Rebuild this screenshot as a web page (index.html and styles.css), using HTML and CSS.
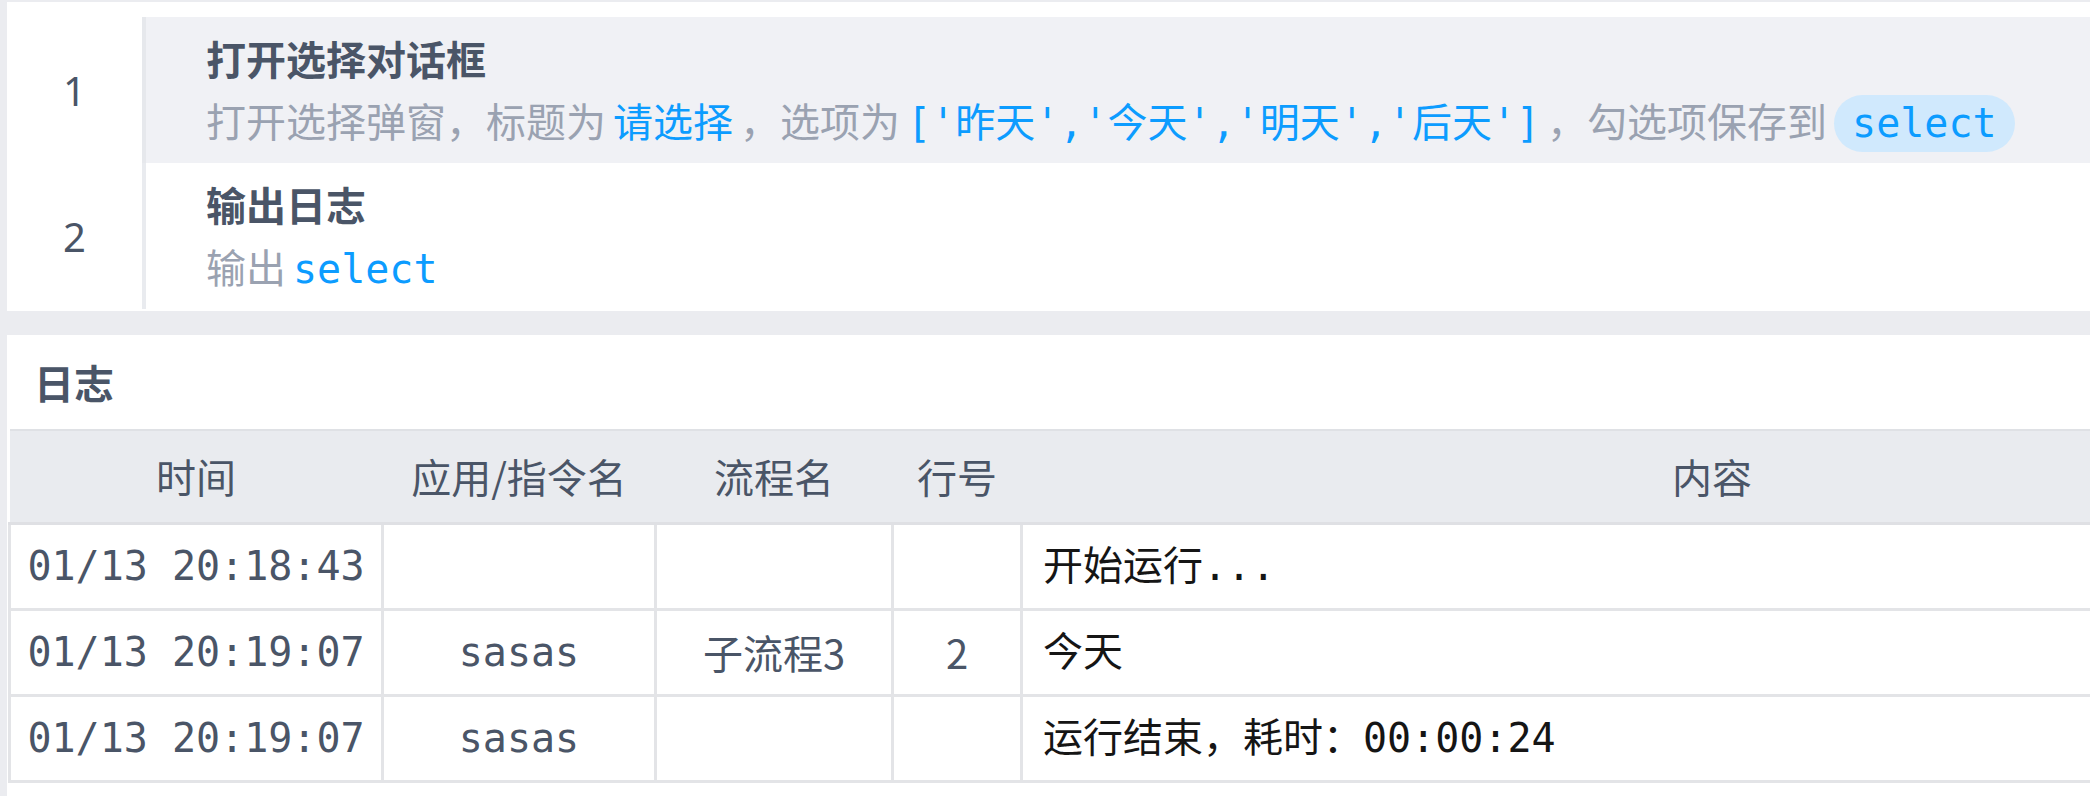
FILE: index.html
```html
<!DOCTYPE html>
<html lang="zh-CN">
<head>
<meta charset="utf-8">
<title>流程日志</title>
<link rel="stylesheet" href="styles.css">
</head>
<body>
<div class="page">
  <section class="flow">
    <div class="step active">
      <div class="step-no">1</div>
      <div class="step-body">
        <div class="step-title">打开选择对话框</div>
        <div class="step-desc">打开选择弹窗，标题为<span class="val">请选择</span>，选项为<span class="val code">['昨天','今天','明天','后天']</span>，勾选项保存到<span class="var">select</span></div>
      </div>
    </div>
    <div class="step">
      <div class="step-no">2</div>
      <div class="step-body">
        <div class="step-title">输出日志</div>
        <div class="step-desc">输出<span class="val code">select</span></div>
      </div>
    </div>
  </section>

  <section class="log">
    <h2 class="log-title">日志</h2>
    <table class="log-table">
      <colgroup>
        <col class="c-time">
        <col class="c-app">
        <col class="c-flow">
        <col class="c-line">
        <col class="c-msg">
      </colgroup>
      <thead>
        <tr><th>时间</th><th>应用/指令名</th><th>流程名</th><th>行号</th><th>内容</th></tr>
      </thead>
      <tbody>
        <tr>
          <td class="mono">01/13 20:18:43</td>
          <td class="mono"></td>
          <td></td>
          <td></td>
          <td class="msg">开始运行...</td>
        </tr>
        <tr>
          <td class="mono">01/13 20:19:07</td>
          <td class="mono">sasas</td>
          <td>子流程3</td>
          <td>2</td>
          <td class="msg">今天</td>
        </tr>
        <tr>
          <td class="mono">01/13 20:19:07</td>
          <td class="mono">sasas</td>
          <td></td>
          <td></td>
          <td class="msg">运行结束，耗时：00:00:24</td>
        </tr>
      </tbody>
    </table>
  </section>
</div>
</body>
</html>
```

FILE: styles.css
```css
html, body {
  margin: 0;
  padding: 0;
}

body {
  background: #ebecf0;
  overflow: hidden;
  font-family: "Noto Sans CJK SC", "Noto Sans", sans-serif;
  color: #4a5567;
}

.page {
  width: 2500px;
  padding: 2px 0 0 7px;
  display: flex;
  flex-direction: column;
  gap: 24px;
}

/* ---------- flow steps ---------- */
.flow {
  background: #ffffff;
  padding: 15px 0 2px 0;
}

.step {
  display: flex;
}

.step-no {
  width: 135px;
  flex: none;
  display: flex;
  align-items: center;
  justify-content: center;
  font-family: "Noto Sans", sans-serif;
  font-size: 40px;
  color: #4a5567;
}

.step-body {
  flex: 1;
  border-left: 4px solid #e9ebef;
  padding: 10px 0 12px 60px;
}

.step.active .step-body {
  background: #f0f1f5;
  border-left-color: #e6e8ec;
}

.step-title {
  height: 62px;
  font-size: 40px;
  line-height: 62px;
  font-weight: 700;
  color: #4a5567;
}

.step-desc {
  height: 62px;
  font-size: 40px;
  line-height: 62px;
  color: #9aa2b1;
  white-space: nowrap;
}

.val {
  color: #0c9cff;
  margin: 0 7px;
}

.code {
  font-family: "DejaVu Sans Mono", "Noto Sans CJK SC", monospace;
  line-height: 1;
}

.var {
  display: inline-block;
  vertical-align: middle;
  margin-left: 7px;
  padding: 0 18px;
  height: 57px;
  line-height: 57px;
  border-radius: 29px;
  background: #d0e9fd;
  color: #0c9cff;
  font-family: "DejaVu Sans Mono", monospace;
  position: relative;
  top: -3px;
}

/* ---------- log ---------- */
.log {
  background: #ffffff;
  min-height: 470px;
}

.log-title {
  margin: 0;
  padding: 19px 27px;
  font-size: 40px;
  line-height: 56px;
  font-weight: 700;
  color: #4a5567;
}

.log-table {
  margin-left: 1px;
  width: 2396px;
  table-layout: fixed;
  border-collapse: collapse;
  font-size: 40px;
}

.c-time { width: 373px; }
.c-app  { width: 273px; }
.c-flow { width: 237px; }
.c-line { width: 129px; }

.log-table th {
  background: #e9ebef;
  font-weight: 400;
  color: #4a5567;
  line-height: 91px;
  padding: 0;
  text-align: center;
  border-top: 2px solid #dfe1e5;
  border-bottom: 3px solid #dfe0e4;
}

.log-table td {
  line-height: 83px;
  padding: 0;
  text-align: center;
  white-space: nowrap;
  color: #4a5567;
  border: 3px solid #e3e4e7;
}

.log-table td.mono {
  font-family: "DejaVu Sans Mono", "Noto Sans CJK SC", monospace;
}

.log-table td.msg {
  text-align: left;
  padding-left: 20px;
  color: #151515;
  font-family: "DejaVu Sans Mono", "Noto Sans CJK SC", monospace;
}
```
